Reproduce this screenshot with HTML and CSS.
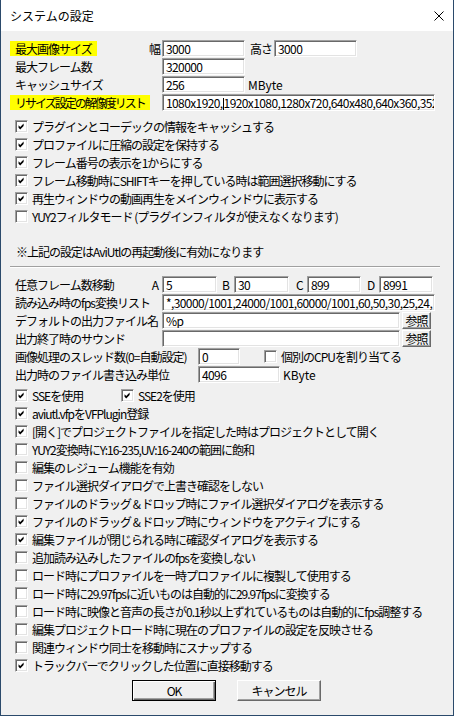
FILE: index.html
```html
<!DOCTYPE html>
<html lang="ja">
<head>
    <meta charset="UTF-8">
    <meta name="viewport" content="width=device-width, initial-scale=1.0">
    <title>システムの設定</title>
    <link rel="stylesheet" href="styles.css">
</head>
<body>
    <div class="window">
        <div class="titlebar">
            <span class="title">システムの設定</span>
            <svg class="close" width="10" height="10" viewBox="0 0 10 10">
                <path d="M0.5 0.5L9.5 9.5M9.5 0.5L0.5 9.5" stroke="#000" stroke-width="1" fill="none"/>
            </svg>
        </div>

        <div class="content">
            <!-- image / memory settings -->
            <div class="row">
                <div class="lbl"><span class="mark">最大画像サイズ</span><span class="key">幅</span></div>
                <div class="tb w83">3000</div>
                <span class="key-h">高さ</span>
                <div class="tb w83">3000</div>
            </div>
            <div class="row">
                <div class="lbl">最大フレーム数</div>
                <div class="tb w83">320000</div>
            </div>
            <div class="row">
                <div class="lbl">キャッシュサイズ</div>
                <div class="tb w83">256</div>
                <span class="unit">MByte</span>
            </div>
            <div class="row">
                <div class="lbl"><span class="mark tight">リサイズ設定の解像度リスト</span></div>
                <div class="tb w273">1080x1920,<span class="caret"></span>1920x1080,1280x720,640x480,640x360,352</div>
            </div>

            <div class="checks">
                <div class="ck"><span class="box on"><svg viewBox="0 0 13 13"><polygon points="3,5 5,7 9,3 9,6 5,10 3,8"/></svg></span>プラグインとコーデックの情報をキャッシュする</div>
                <div class="ck"><span class="box on"><svg viewBox="0 0 13 13"><polygon points="3,5 5,7 9,3 9,6 5,10 3,8"/></svg></span>プロファイルに圧縮の設定を保持する</div>
                <div class="ck"><span class="box on"><svg viewBox="0 0 13 13"><polygon points="3,5 5,7 9,3 9,6 5,10 3,8"/></svg></span>フレーム番号の表示を1からにする</div>
                <div class="ck"><span class="box on"><svg viewBox="0 0 13 13"><polygon points="3,5 5,7 9,3 9,6 5,10 3,8"/></svg></span>フレーム移動時にSHIFTキーを押している時は範囲選択移動にする</div>
                <div class="ck"><span class="box on"><svg viewBox="0 0 13 13"><polygon points="3,5 5,7 9,3 9,6 5,10 3,8"/></svg></span>再生ウィンドウの動画再生をメインウィンドウに表示する</div>
                <div class="ck"><span class="box"></span>YUY2フィルタモード (プラグインフィルタが使えなくなります)</div>
            </div>

            <div class="note">※上記の設定はAviUtlの再起動後に有効になります</div>
            <div class="sep"></div>

            <!-- frame / output settings -->
            <div class="sec2">
                <div class="row">
                    <div class="lbl">任意フレーム数移動<span class="key k-a">A</span></div>
                    <div class="tb w55">5</div>
                    <span class="key k-b">B</span>
                    <div class="tb w55">30</div>
                    <span class="key k-c">C</span>
                    <div class="tb w54">899</div>
                    <span class="key k-d">D</span>
                    <div class="tb w54">8991</div>
                </div>
                <div class="row">
                    <div class="lbl">読み込み時のfps変換リスト</div>
                    <div class="tb w273">*,30000/1001,24000/1001,60000/1001,60,50,30,25,24,</div>
                </div>
                <div class="row">
                    <div class="lbl">デフォルトの出力ファイル名</div>
                    <div class="tb w238">%p</div>
                    <button class="btn small">参照</button>
                </div>
                <div class="row">
                    <div class="lbl">出力終了時のサウンド</div>
                    <div class="tb w238"></div>
                    <button class="btn small">参照</button>
                </div>
                <div class="row">
                    <div class="lbl wide">画像処理のスレッド数(0=自動設定)</div>
                    <div class="tb w42">0</div>
                    <div class="ck inline cpu"><span class="box"></span>個別のCPUを割り当てる</div>
                </div>
                <div class="row">
                    <div class="lbl wide">出力時のファイル書き込み単位</div>
                    <div class="tb w82">4096</div>
                    <span class="unit">KByte</span>
                </div>
            </div>

            <div class="checks2">
                <div class="ck-pair">
                    <div class="ck sse"><span class="box on"><svg viewBox="0 0 13 13"><polygon points="3,5 5,7 9,3 9,6 5,10 3,8"/></svg></span>SSEを使用</div>
                    <div class="ck"><span class="box on"><svg viewBox="0 0 13 13"><polygon points="3,5 5,7 9,3 9,6 5,10 3,8"/></svg></span>SSE2を使用</div>
                </div>
                <div class="ck"><span class="box on"><svg viewBox="0 0 13 13"><polygon points="3,5 5,7 9,3 9,6 5,10 3,8"/></svg></span>aviutl.vfpをVFPlugin登録</div>
                <div class="ck"><span class="box on"><svg viewBox="0 0 13 13"><polygon points="3,5 5,7 9,3 9,6 5,10 3,8"/></svg></span>[開く]でプロジェクトファイルを指定した時はプロジェクトとして開く</div>
                <div class="ck"><span class="box"></span>YUY2変換時にY:16-235,UV:16-240の範囲に飽和</div>
                <div class="ck"><span class="box"></span>編集のレジューム機能を有効</div>
                <div class="ck"><span class="box"></span>ファイル選択ダイアログで上書き確認をしない</div>
                <div class="ck"><span class="box"></span>ファイルのドラッグ &amp; ドロップ時にファイル選択ダイアログを表示する</div>
                <div class="ck"><span class="box on"><svg viewBox="0 0 13 13"><polygon points="3,5 5,7 9,3 9,6 5,10 3,8"/></svg></span>ファイルのドラッグ &amp; ドロップ時にウィンドウをアクティブにする</div>
                <div class="ck"><span class="box on"><svg viewBox="0 0 13 13"><polygon points="3,5 5,7 9,3 9,6 5,10 3,8"/></svg></span>編集ファイルが閉じられる時に確認ダイアログを表示する</div>
                <div class="ck"><span class="box"></span>追加読み込みしたファイルのfpsを変換しない</div>
                <div class="ck"><span class="box"></span>ロード時にプロファイルを一時プロファイルに複製して使用する</div>
                <div class="ck"><span class="box"></span>ロード時に29.97fpsに近いものは自動的に29.97fpsに変換する</div>
                <div class="ck"><span class="box"></span>ロード時に映像と音声の長さが0.1秒以上ずれているものは自動的にfps調整する</div>
                <div class="ck"><span class="box"></span>編集プロジェクトロード時に現在のプロファイルの設定を反映させる</div>
                <div class="ck"><span class="box"></span>関連ウィンドウ同士を移動時にスナップする</div>
                <div class="ck"><span class="box on"><svg viewBox="0 0 13 13"><polygon points="3,5 5,7 9,3 9,6 5,10 3,8"/></svg></span>トラックバーでクリックした位置に直接移動する</div>
            </div>

            <div class="btns">
                <button class="btn big default">OK</button>
                <button class="btn big">キャンセル</button>
            </div>
        </div>
    </div>
</body>
</html>
```

FILE: styles.css
```css
*{
    box-sizing: border-box;
}

body{
    margin: 0;
    background-color: #f0f0f0;
    font-family: "Noto Sans CJK JP", "Noto Sans", sans-serif;
    color: #000;
}

.window{
    width: 454px;
    height: 716px;
    border: 1px solid #2b4a6b;
    border-top: none;
    background-color: #f0f0f0;
    overflow: hidden;
}

.titlebar{
    height: 31px;
    background-color: #fff;
    display: flex;
    align-items: center;
    justify-content: space-between;
    padding: 0 9px 0 9px;
}

.title{
    font-size: 12px;
}

.close{
    display: block;
}

.content{
    padding: 9px 0 0 14px;
    font-size: 12px;
    letter-spacing: -1px;
}

.row{
    display: flex;
    align-items: center;
    height: 17px;
    margin-bottom: 1px;
    white-space: nowrap;
}

.lbl{
    width: 147px;
    flex: none;
    display: flex;
    justify-content: space-between;
    align-items: center;
}

.lbl.wide{
    width: 183px;
}

.mark{
    background-color: #ffff00;
    margin-left: -5px;
    padding: 0 5px;
    line-height: 15px;
}

.mark.tight{
    letter-spacing: -2px;
}

.key{
    padding-right: 2px;
}

.k-a{
    padding-right: 4px;
}

.k-b{
    width: 17px;
    padding-left: 5px;
}

.k-c{
    width: 18px;
    padding-left: 7px;
}

.k-d{
    width: 18px;
    padding-left: 6px;
}

.key-h{
    width: 29px;
    padding-left: 5px;
}

.unit{
    margin-left: 3px;
    letter-spacing: 0;
}

/* sunken text box */
.tb{
    flex: none;
    height: 17px;
    background-color: #fff;
    border: 1px solid;
    border-color: #a0a0a0 #fff #fff #a0a0a0;
    box-shadow: inset 1px 1px #696969, inset -1px -1px #e3e3e3;
    padding: 0 3px;
    line-height: 15px;
    font-size: 12px;
    letter-spacing: -0.6px;
    white-space: nowrap;
    overflow: hidden;
}

.caret{
    display: inline-block;
    width: 1px;
    height: 12px;
    background-color: #000;
    vertical-align: -2px;
}

.w83{ width: 83px; }
.w273{ width: 273px; }
.w55{ width: 55px; }
.w54{ width: 54px; }
.w238{ width: 238px; }
.w42{ width: 42px; }
.w82{ width: 82px; }

.checks{
    margin-top: 7px;
}

.ck{
    display: flex;
    height: 18px;
    line-height: 18px;
    white-space: nowrap;
}

.box{
    flex: none;
    width: 13px;
    height: 13px;
    margin-top: 2px;
    margin-right: 4px;
    background-color: #fff;
    border: 1px solid;
    border-color: #a0a0a0 #fff #fff #a0a0a0;
    box-shadow: inset 1px 1px #696969, inset -1px -1px #e3e3e3;
}

.box svg{
    display: block;
    width: 11px;
    height: 11px;
    margin: 0;
    fill: #000;
}

.ck.inline{
    align-items: center;
    height: 17px;
}

.ck.inline .box{
    margin-top: 0;
}

.cpu{
    margin-left: 24px;
}

.note{
    margin-top: 17px;
    margin-left: 1px;
    line-height: 18px;
}

.sep{
    margin: 5px 0 0 -5px;
    width: 430px;
    border-top: 1px solid #a0a0a0;
    border-bottom: 1px solid #fff;
}

.sec2{
    margin-top: 8px;
}

.checks2{
    margin-top: 4px;
}

.ck-pair{
    display: flex;
}

.sse{
    width: 106px;
}

/* raised push buttons */
.btn{
    font-family: inherit;
    font-size: 12px;
    letter-spacing: -1px;
    color: #000;
    background-color: #e1e1e1;
    border: 1px solid;
    border-color: #fff #696969 #696969 #fff;
    box-shadow: inset -1px -1px #a0a0a0;
    padding: 0;
    flex: none;
}

.btn.small{
    width: 29px;
    height: 17px;
    margin-left: 2px;
    line-height: 14px;
    background-color: #f0f0f0;
}

.btns{
    display: flex;
    gap: 21px;
    margin-top: 5px;
    padding-left: 117px;
}

.btn.big{
    width: 84px;
    height: 21px;
    background-color: #f0f0f0;
}

.btn.default{
    border: 1px solid #000;
    box-shadow: inset 1px 1px #fff, inset -1px -1px #696969, inset -2px -2px #a0a0a0;
}
```
